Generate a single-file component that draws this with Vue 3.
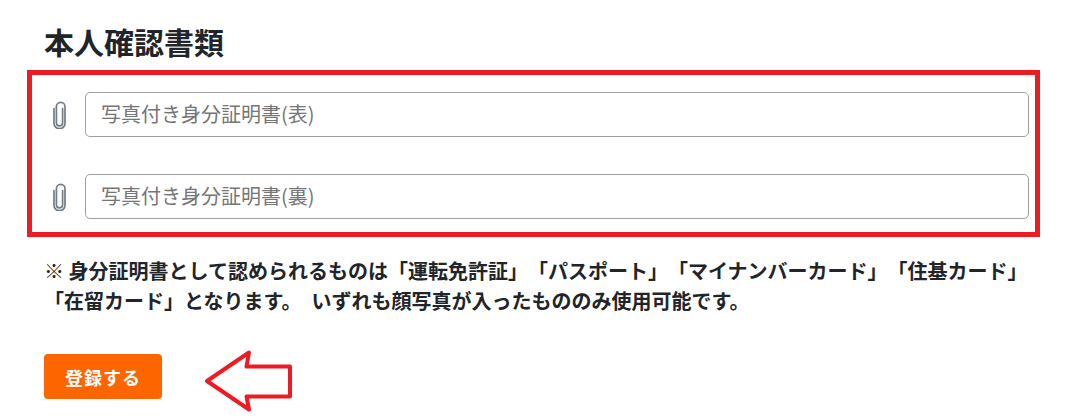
<script setup>
const files = [
  { id: 'front', label: '写真付き身分証明書(表)' },
  { id: 'back', label: '写真付き身分証明書(裏)' }
];
</script>

<template>
  <main class="page">
    <h2 class="title">本人確認書類</h2>
    <section class="upload-box">
      <div v-for="file in files" :key="file.id" class="file-row">
        <svg class="clip" viewBox="0 0 15 28" width="15" height="28" fill="none">
          <path
            d="M10.600 7.500v14.200a3.100 3.100 0 0 1-6.200 0V5.600a4.300 4.300 0 0 1 8.600 0v16.600a5.500 5.500 0 0 1-11 0V7.500"
            stroke="#6f7c86"
            stroke-width="1.700"
            stroke-linecap="round"
          />
        </svg>
        <input class="file-input" type="text" :placeholder="file.label">
      </div>
    </section>
    <p class="note">
      ※ 身分証明書として認められるものは「運転免許証」「パスポート」「マイナンバーカード」「住基カード」<br>「在留カード」となります。&ensp;いずれも顔写真が入ったもののみ使用可能です。
    </p>
    <div class="actions">
      <button class="submit" type="button">登録する</button>
      <svg class="arrow" viewBox="0 0 90 62" width="90" height="62" fill="none">
        <path
          d="M3 31 45 2.500 42.500 16.500H86V46.500H42.500L45 59.500Z"
          stroke="#ed1c24"
          stroke-width="4"
          stroke-linejoin="round"
        />
      </svg>
    </div>
  </main>
</template>

<style scoped>
.page {
  width: 1077px;
  height: 419px;
  box-sizing: border-box;
  padding: 23px 37px 0 27px;
  background: #fff;
  color: #212529;
  font-family: "Noto Sans CJK JP", "Liberation Sans", sans-serif;
  text-spacing-trim: space-all;
  overflow: hidden;
}
.title {
  margin: 0 0 10px 17px;
  font-size: 30px;
  line-height: 37px;
  font-weight: 700;
}
.upload-box {
  box-sizing: border-box;
  height: 167px;
  padding: 17px 6px 0 20px;
  border: 5px solid #ed1c24;
  display: flex;
  flex-direction: column;
  gap: 37px;
}
.file-row {
  display: flex;
  align-items: center;
  gap: 18px;
}
.clip {
  flex: none;
}
.file-input {
  flex: 1;
  box-sizing: border-box;
  height: 45px;
  padding: 0 15px 3px;
  border: 1px solid #a0a0a0;
  border-radius: 5px;
  background: #fff;
  font-family: inherit;
  font-size: 20px;
  outline: none;
}
.file-input::placeholder {
  color: #757575;
}
.note {
  margin: 19px 0 0 17px;
  font-size: 20px;
  line-height: 30px;
  font-weight: 700;
  white-space: nowrap;
}
.actions {
  position: relative;
  margin: 38px 0 0 17px;
}
.submit {
  width: 118px;
  height: 45px;
  border: none;
  border-radius: 4px;
  background: #fc6500;
  color: #fff;
  font-family: inherit;
  font-size: 18px;
  font-weight: 700;
  letter-spacing: 1px;
}
.arrow {
  position: absolute;
  left: 160px;
  top: -4px;
}
</style>
